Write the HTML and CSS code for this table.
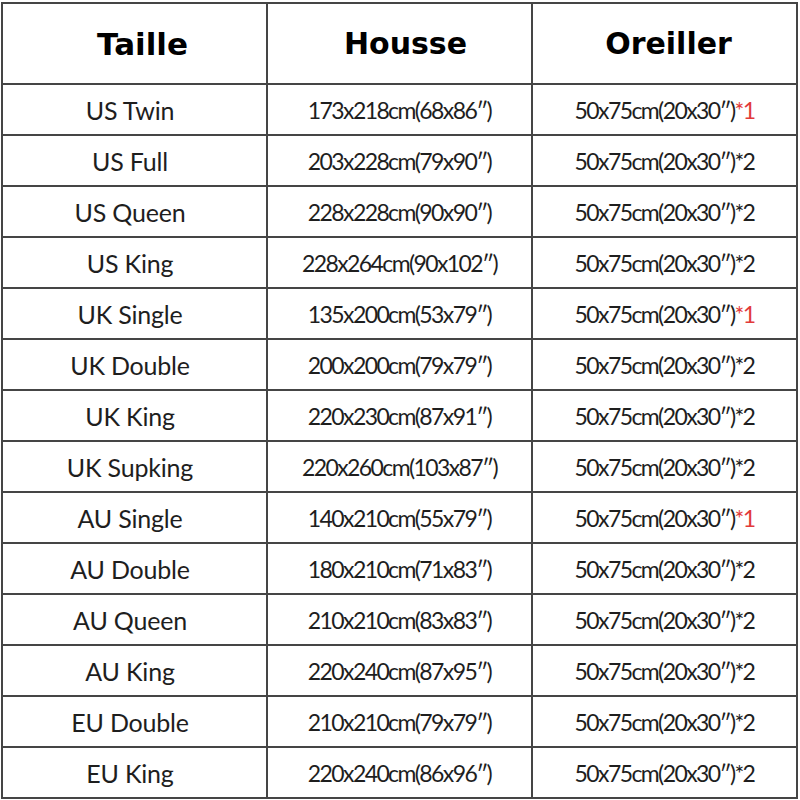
FILE: index.html
```
<!DOCTYPE html>
<html lang="fr">
<head>
<meta charset="utf-8">
<title>Tableau des tailles</title>
<link rel="stylesheet" href="styles.css">
</head>
<body>
<table class="sizes">
  <thead>
    <tr class="head-row">
      <th class="h-taille">Taille</th>
      <th class="h-housse">Housse</th>
      <th class="h-oreiller">Oreiller</th>
    </tr>
  </thead>
  <tbody>
    <tr><td class="name">US Twin</td><td>173x218cm(68x86″)</td><td>50x75cm(20x30″)<span class="red">*1</span></td></tr>
    <tr><td class="name">US Full</td><td>203x228cm(79x90″)</td><td>50x75cm(20x30″)*2</td></tr>
    <tr><td class="name">US Queen</td><td>228x228cm(90x90″)</td><td>50x75cm(20x30″)*2</td></tr>
    <tr><td class="name">US King</td><td>228x264cm(90x102″)</td><td>50x75cm(20x30″)*2</td></tr>
    <tr><td class="name">UK Single</td><td>135x200cm(53x79″)</td><td>50x75cm(20x30″)<span class="red">*1</span></td></tr>
    <tr><td class="name">UK Double</td><td>200x200cm(79x79″)</td><td>50x75cm(20x30″)*2</td></tr>
    <tr><td class="name">UK King</td><td>220x230cm(87x91″)</td><td>50x75cm(20x30″)*2</td></tr>
    <tr><td class="name">UK Supking</td><td>220x260cm(103x87″)</td><td>50x75cm(20x30″)*2</td></tr>
    <tr><td class="name">AU Single</td><td>140x210cm(55x79″)</td><td>50x75cm(20x30″)<span class="red">*1</span></td></tr>
    <tr><td class="name">AU Double</td><td>180x210cm(71x83″)</td><td>50x75cm(20x30″)*2</td></tr>
    <tr><td class="name">AU Queen</td><td>210x210cm(83x83″)</td><td>50x75cm(20x30″)*2</td></tr>
    <tr><td class="name">AU King</td><td>220x240cm(87x95″)</td><td>50x75cm(20x30″)*2</td></tr>
    <tr><td class="name">EU Double</td><td>210x210cm(79x79″)</td><td>50x75cm(20x30″)*2</td></tr>
    <tr><td class="name">EU King</td><td>220x240cm(86x96″)</td><td>50x75cm(20x30″)*2</td></tr>
  </tbody>
</table>
</body>
</html>
```
FILE: styles.css
```
html, body {
  margin: 0;
  padding: 0;
  background: #ffffff;
}

.sizes {
  border-collapse: collapse;
  margin: 2px 0 0 1px;
  width: 797px;
  table-layout: fixed;
  color: #1e1e1e;
}

.sizes th,
.sizes td {
  border: 2px solid #454545;
  text-align: center;
  vertical-align: middle;
  padding: 0;
  white-space: nowrap;
}

.sizes th {
  height: 79px;
  font-family: "DejaVu Sans", sans-serif;
  font-weight: bold;
  font-size: 30px;
  color: #000;
}

.sizes th.h-taille {
  padding-left: 16px;
  font-size: 31px;
}

.sizes th.h-housse {
  padding-left: 12px;
}

.sizes th.h-oreiller {
  padding-left: 8px;
}

.sizes td {
  height: 49px;
  font-family: "Lato", sans-serif;
  font-size: 23px;
  letter-spacing: -1.6px;
}

.sizes td.name {
  font-size: 25px;
  letter-spacing: -0.2px;
  padding-right: 9px;
}

.red {
  color: #e23a3a;
}
```
